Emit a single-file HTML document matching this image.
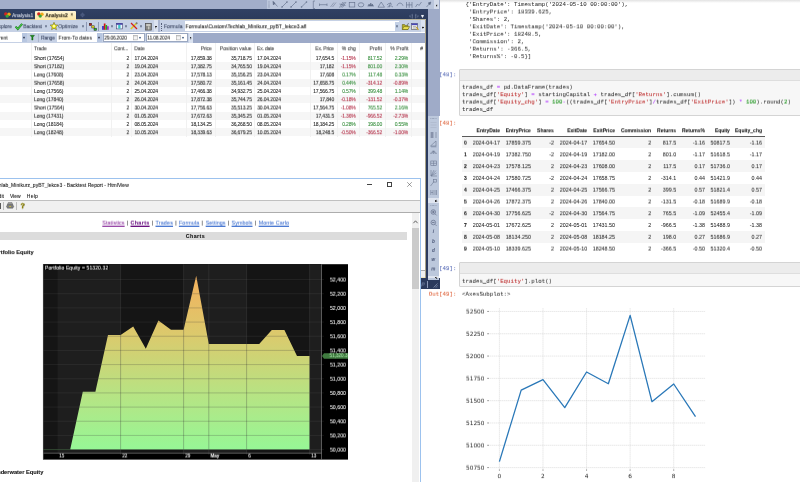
<!DOCTYPE html>
<html><head><meta charset="utf-8"><title>Backtest</title>
<style>
html,body{margin:0;padding:0}
body{width:800px;height:482px;position:relative;overflow:hidden;background:#fff;font-family:"Liberation Sans",sans-serif}
div{position:absolute;box-sizing:border-box}
svg{position:absolute;overflow:visible}
.r{left:0;width:800px}
.t{white-space:nowrap;top:0;-webkit-text-stroke:0.09px}
a{color:inherit}
</style></head><body>
<div style="left:439.5px;top:0px;width:361px;height:2.6px;background:linear-gradient(#e2e2e2,#fff);"></div>
<div style="left:459.2px;top:69.25px;width:345px;height:46.95px;background:#f7f7f7;border:0.5px solid #d4d4d4;border-radius:1px;"></div>
<div style="left:459.7px;top:69.75px;width:344px;height:11.5px;background:#ececec;border-bottom:0.5px solid #dedede;"></div>
<div style="left:459.2px;top:262.3px;width:345px;height:25.19999999999999px;background:#f7f7f7;border:0.5px solid #d4d4d4;border-radius:1px;"></div>
<div style="left:459.7px;top:262.8px;width:344px;height:11.5px;background:#ececec;border-bottom:0.5px solid #dedede;"></div>
<div style="left:461.8px;top:136.715px;width:303.4px;height:11.77px;background:#f5f5f5;"></div>
<div style="left:461.8px;top:160.255px;width:303.4px;height:11.77px;background:#f5f5f5;"></div>
<div style="left:461.8px;top:183.79500000000002px;width:303.4px;height:11.77px;background:#f5f5f5;"></div>
<div style="left:461.8px;top:207.335px;width:303.4px;height:11.77px;background:#f5f5f5;"></div>
<div style="left:461.8px;top:230.875px;width:303.4px;height:11.77px;background:#f5f5f5;"></div>
<div style="left:461.8px;top:135.85px;width:303.4px;height:0.6px;background:#5a5a5a;"></div>
<svg style="left:0;top:0" width="800" height="482" viewBox="0 0 800 482"><line x1="499.40" y1="308.10" x2="499.40" y2="468.89" stroke="#d4d4d4" stroke-width="0.55" stroke-dasharray="1.5 0.5"/><line x1="499.40" y1="469.29" x2="499.40" y2="470.89" stroke="#333" stroke-width="0.45"/><line x1="542.98" y1="308.10" x2="542.98" y2="468.89" stroke="#d4d4d4" stroke-width="0.55" stroke-dasharray="1.5 0.5"/><line x1="542.98" y1="469.29" x2="542.98" y2="470.89" stroke="#333" stroke-width="0.45"/><line x1="586.56" y1="308.10" x2="586.56" y2="468.89" stroke="#d4d4d4" stroke-width="0.55" stroke-dasharray="1.5 0.5"/><line x1="586.56" y1="469.29" x2="586.56" y2="470.89" stroke="#333" stroke-width="0.45"/><line x1="630.14" y1="308.10" x2="630.14" y2="468.89" stroke="#d4d4d4" stroke-width="0.55" stroke-dasharray="1.5 0.5"/><line x1="630.14" y1="469.29" x2="630.14" y2="470.89" stroke="#333" stroke-width="0.45"/><line x1="673.72" y1="308.10" x2="673.72" y2="468.89" stroke="#d4d4d4" stroke-width="0.55" stroke-dasharray="1.5 0.5"/><line x1="673.72" y1="469.29" x2="673.72" y2="470.89" stroke="#333" stroke-width="0.45"/><line x1="489.59" y1="467.60" x2="705.32" y2="467.60" stroke="#d4d4d4" stroke-width="0.55" stroke-dasharray="1.5 0.5"/><line x1="487.19" y1="467.60" x2="488.99" y2="467.60" stroke="#333" stroke-width="0.5"/><line x1="489.59" y1="445.29" x2="705.32" y2="445.29" stroke="#d4d4d4" stroke-width="0.55" stroke-dasharray="1.5 0.5"/><line x1="487.19" y1="445.29" x2="488.99" y2="445.29" stroke="#333" stroke-width="0.5"/><line x1="489.59" y1="422.98" x2="705.32" y2="422.98" stroke="#d4d4d4" stroke-width="0.55" stroke-dasharray="1.5 0.5"/><line x1="487.19" y1="422.98" x2="488.99" y2="422.98" stroke="#333" stroke-width="0.5"/><line x1="489.59" y1="400.67" x2="705.32" y2="400.67" stroke="#d4d4d4" stroke-width="0.55" stroke-dasharray="1.5 0.5"/><line x1="487.19" y1="400.67" x2="488.99" y2="400.67" stroke="#333" stroke-width="0.5"/><line x1="489.59" y1="378.36" x2="705.32" y2="378.36" stroke="#d4d4d4" stroke-width="0.55" stroke-dasharray="1.5 0.5"/><line x1="487.19" y1="378.36" x2="488.99" y2="378.36" stroke="#333" stroke-width="0.5"/><line x1="489.59" y1="356.05" x2="705.32" y2="356.05" stroke="#d4d4d4" stroke-width="0.55" stroke-dasharray="1.5 0.5"/><line x1="487.19" y1="356.05" x2="488.99" y2="356.05" stroke="#333" stroke-width="0.5"/><line x1="489.59" y1="333.74" x2="705.32" y2="333.74" stroke="#d4d4d4" stroke-width="0.55" stroke-dasharray="1.5 0.5"/><line x1="487.19" y1="333.74" x2="488.99" y2="333.74" stroke="#333" stroke-width="0.5"/><line x1="489.59" y1="311.43" x2="705.32" y2="311.43" stroke="#d4d4d4" stroke-width="0.55" stroke-dasharray="1.5 0.5"/><line x1="487.19" y1="311.43" x2="488.99" y2="311.43" stroke="#333" stroke-width="0.5"/><polyline points="499.40,461.58 521.19,390.10 542.98,379.61 564.77,407.64 586.56,371.99 608.35,383.72 630.14,315.41 651.93,401.66 673.72,383.99 695.51,416.70" fill="none" stroke="#2a78b8" stroke-width="1.3" stroke-linejoin="round"/></svg>
<div class="r" style="top:1px;height:8px;line-height:8px;transform:translate3d(0,0.0px,0) rotateX(0.01deg);"><div class="t" style="left:465.6px;font-size:5.78px;color:#2a2a2a;font-family:'Liberation Mono',monospace;-webkit-text-stroke:0.03px;white-space:pre;">{'EntryDate': Timestamp('2024-05-10 00:00:00'),</div></div>
<div class="r" style="top:8px;height:8px;line-height:8px;transform:translate3d(0,0.44px,0) rotateX(0.01deg);"><div class="t" style="left:465.6px;font-size:5.78px;color:#2a2a2a;font-family:'Liberation Mono',monospace;-webkit-text-stroke:0.03px;white-space:pre;"> 'EntryPrice': 18339.625,</div></div>
<div class="r" style="top:15px;height:8px;line-height:8px;transform:translate3d(0,0.88px,0) rotateX(0.01deg);"><div class="t" style="left:465.6px;font-size:5.78px;color:#2a2a2a;font-family:'Liberation Mono',monospace;-webkit-text-stroke:0.03px;white-space:pre;"> 'Shares': 2,</div></div>
<div class="r" style="top:23px;height:8px;line-height:8px;transform:translate3d(0,0.32px,0) rotateX(0.01deg);"><div class="t" style="left:465.6px;font-size:5.78px;color:#2a2a2a;font-family:'Liberation Mono',monospace;-webkit-text-stroke:0.03px;white-space:pre;"> 'ExitDate': Timestamp('2024-05-10 00:00:00'),</div></div>
<div class="r" style="top:30px;height:8px;line-height:8px;transform:translate3d(0,0.76px,0) rotateX(0.01deg);"><div class="t" style="left:465.6px;font-size:5.78px;color:#2a2a2a;font-family:'Liberation Mono',monospace;-webkit-text-stroke:0.03px;white-space:pre;"> 'ExitPrice': 18248.5,</div></div>
<div class="r" style="top:38px;height:8px;line-height:8px;transform:translate3d(0,0.2px,0) rotateX(0.01deg);"><div class="t" style="left:465.6px;font-size:5.78px;color:#2a2a2a;font-family:'Liberation Mono',monospace;-webkit-text-stroke:0.03px;white-space:pre;"> 'Commission': 2,</div></div>
<div class="r" style="top:45px;height:8px;line-height:8px;transform:translate3d(0,0.64px,0) rotateX(0.01deg);"><div class="t" style="left:465.6px;font-size:5.78px;color:#2a2a2a;font-family:'Liberation Mono',monospace;-webkit-text-stroke:0.03px;white-space:pre;"> 'Returns': -366.5,</div></div>
<div class="r" style="top:53px;height:8px;line-height:8px;transform:translate3d(0,0.08px,0) rotateX(0.01deg);"><div class="t" style="left:465.6px;font-size:5.78px;color:#2a2a2a;font-family:'Liberation Mono',monospace;-webkit-text-stroke:0.03px;white-space:pre;"> 'Returns%': -0.5}]</div></div>
<div class="r" style="top:71px;height:8px;line-height:8px;transform:translate3d(0,0.3px,0) rotateX(0.01deg);"><div class="t" style="right:343.6px;font-size:5.78px;color:#4a5fb0;font-family:'Liberation Mono',monospace;-webkit-text-stroke:0.03px;white-space:pre;">In [48]:</div></div>
<div class="r" style="top:83px;height:8px;line-height:8px;transform:translate3d(0,0.7px,0) rotateX(0.01deg);"><div class="t" style="left:462.1px;font-size:5.78px;color:#2a2a2a;font-family:'Liberation Mono',monospace;-webkit-text-stroke:0.03px;">trades_df <span style="color:#a2f">=</span> pd.DataFrame(trades)</div></div>
<div class="r" style="top:91px;height:8px;line-height:8px;transform:translate3d(0,0.13px,0) rotateX(0.01deg);"><div class="t" style="left:462.1px;font-size:5.78px;color:#2a2a2a;font-family:'Liberation Mono',monospace;-webkit-text-stroke:0.03px;">trades_df[<span style="color:#ba2121">'Equity'</span>] <span style="color:#a2f">=</span> startingCapital <span style="color:#a2f">+</span> trades_df[<span style="color:#ba2121">'Returns'</span>].cumsum()</div></div>
<div class="r" style="top:98px;height:8px;line-height:8px;transform:translate3d(0,0.56px,0) rotateX(0.01deg);"><div class="t" style="left:462.1px;font-size:5.78px;color:#2a2a2a;font-family:'Liberation Mono',monospace;-webkit-text-stroke:0.03px;">trades_df[<span style="color:#ba2121">'Equity_chg'</span>] <span style="color:#a2f">=</span> <span style="color:#080">100</span><span style="color:#a2f">-</span>((trades_df[<span style="color:#ba2121">'EntryPrice'</span>]<span style="color:#a2f">/</span>trades_df[<span style="color:#ba2121">'ExitPrice'</span>]) <span style="color:#a2f">*</span> <span style="color:#080">100</span>).round(<span style="color:#080">2</span>)</div></div>
<div class="r" style="top:105px;height:8px;line-height:8px;transform:translate3d(0,0.99px,0) rotateX(0.01deg);"><div class="t" style="left:462.1px;font-size:5.78px;color:#2a2a2a;font-family:'Liberation Mono',monospace;-webkit-text-stroke:0.03px;">trades_df</div></div>
<div class="r" style="top:119px;height:8px;line-height:8px;transform:translate3d(0,0.7px,0) rotateX(0.01deg);"><div class="t" style="right:343.6px;font-size:5.78px;color:#dc5a30;font-family:'Liberation Mono',monospace;-webkit-text-stroke:0.03px;">Out[48]:</div></div>
<div class="r" style="top:126px;height:8px;line-height:8px;transform:translate3d(0,0.3px,0) rotateX(0.01deg);"><div class="t" style="right:300.03px;font-size:5.0px;color:#111;font-weight:700;-webkit-text-stroke:0.05px;letter-spacing:-0.027px;">EntryDate</div><div class="t" style="right:269.08px;font-size:5.0px;color:#111;font-weight:700;-webkit-text-stroke:0.05px;letter-spacing:0.021px;">EntryPrice</div><div class="t" style="right:246.08px;font-size:5.0px;color:#111;font-weight:700;-webkit-text-stroke:0.05px;letter-spacing:0.025px;">Shares</div><div class="t" style="right:212.92px;font-size:5.0px;color:#111;font-weight:700;-webkit-text-stroke:0.05px;letter-spacing:-0.015px;">ExitDate</div><div class="t" style="right:184.96px;font-size:5.0px;color:#111;font-weight:700;-webkit-text-stroke:0.05px;letter-spacing:0.037px;">ExitPrice</div><div class="t" style="right:148.88px;font-size:5.0px;color:#111;font-weight:700;-webkit-text-stroke:0.05px;letter-spacing:0.022px;">Commission</div><div class="t" style="right:123.87px;font-size:5.0px;color:#111;font-weight:700;-webkit-text-stroke:0.05px;letter-spacing:0.035px;">Returns</div><div class="t" style="right:95.05px;font-size:5.0px;color:#111;font-weight:700;-webkit-text-stroke:0.05px;letter-spacing:-0.048px;">Returns%</div><div class="t" style="right:70.18px;font-size:5.0px;color:#111;font-weight:700;-webkit-text-stroke:0.05px;letter-spacing:-0.076px;">Equity</div><div class="t" style="right:37.99px;font-size:5.0px;color:#111;font-weight:700;-webkit-text-stroke:0.05px;letter-spacing:0.006px;">Equity_chg</div></div>
<div class="r" style="top:138px;height:8px;line-height:8px;transform:translate3d(0,0.6px,0) rotateX(0.01deg);"><div class="t" style="right:333.2px;font-size:5.0px;color:#111;font-weight:700;-webkit-text-stroke:0.05px;">0</div><div class="t" style="right:300.0px;font-size:5.35px;color:#1c1c1c;-webkit-text-stroke:0.04px;">2024-04-17</div><div class="t" style="right:269.1px;font-size:5.35px;color:#1c1c1c;-webkit-text-stroke:0.04px;">17859.375</div><div class="t" style="right:246.1px;font-size:5.35px;color:#1c1c1c;-webkit-text-stroke:0.04px;">-2</div><div class="t" style="right:212.9px;font-size:5.35px;color:#1c1c1c;-webkit-text-stroke:0.04px;">2024-04-17</div><div class="t" style="right:185px;font-size:5.35px;color:#1c1c1c;-webkit-text-stroke:0.04px;">17654.50</div><div class="t" style="right:148.9px;font-size:5.35px;color:#1c1c1c;-webkit-text-stroke:0.04px;">2</div><div class="t" style="right:123.9px;font-size:5.35px;color:#1c1c1c;-webkit-text-stroke:0.04px;">817.5</div><div class="t" style="right:95px;font-size:5.35px;color:#1c1c1c;-webkit-text-stroke:0.04px;">-1.16</div><div class="t" style="right:70.1px;font-size:5.35px;color:#1c1c1c;-webkit-text-stroke:0.04px;">50817.5</div><div class="t" style="right:38px;font-size:5.35px;color:#1c1c1c;-webkit-text-stroke:0.04px;">-1.16</div></div>
<div class="r" style="top:150px;height:8px;line-height:8px;transform:translate3d(0,0.37px,0) rotateX(0.01deg);"><div class="t" style="right:333.2px;font-size:5.0px;color:#111;font-weight:700;-webkit-text-stroke:0.05px;">1</div><div class="t" style="right:300.0px;font-size:5.35px;color:#1c1c1c;-webkit-text-stroke:0.04px;">2024-04-19</div><div class="t" style="right:269.1px;font-size:5.35px;color:#1c1c1c;-webkit-text-stroke:0.04px;">17382.750</div><div class="t" style="right:246.1px;font-size:5.35px;color:#1c1c1c;-webkit-text-stroke:0.04px;">-2</div><div class="t" style="right:212.9px;font-size:5.35px;color:#1c1c1c;-webkit-text-stroke:0.04px;">2024-04-19</div><div class="t" style="right:185px;font-size:5.35px;color:#1c1c1c;-webkit-text-stroke:0.04px;">17182.00</div><div class="t" style="right:148.9px;font-size:5.35px;color:#1c1c1c;-webkit-text-stroke:0.04px;">2</div><div class="t" style="right:123.9px;font-size:5.35px;color:#1c1c1c;-webkit-text-stroke:0.04px;">801.0</div><div class="t" style="right:95px;font-size:5.35px;color:#1c1c1c;-webkit-text-stroke:0.04px;">-1.17</div><div class="t" style="right:70.1px;font-size:5.35px;color:#1c1c1c;-webkit-text-stroke:0.04px;">51618.5</div><div class="t" style="right:38px;font-size:5.35px;color:#1c1c1c;-webkit-text-stroke:0.04px;">-1.17</div></div>
<div class="r" style="top:162px;height:8px;line-height:8px;transform:translate3d(0,0.14px,0) rotateX(0.01deg);"><div class="t" style="right:333.2px;font-size:5.0px;color:#111;font-weight:700;-webkit-text-stroke:0.05px;">2</div><div class="t" style="right:300.0px;font-size:5.35px;color:#1c1c1c;-webkit-text-stroke:0.04px;">2024-04-23</div><div class="t" style="right:269.1px;font-size:5.35px;color:#1c1c1c;-webkit-text-stroke:0.04px;">17578.125</div><div class="t" style="right:246.1px;font-size:5.35px;color:#1c1c1c;-webkit-text-stroke:0.04px;">2</div><div class="t" style="right:212.9px;font-size:5.35px;color:#1c1c1c;-webkit-text-stroke:0.04px;">2024-04-23</div><div class="t" style="right:185px;font-size:5.35px;color:#1c1c1c;-webkit-text-stroke:0.04px;">17608.00</div><div class="t" style="right:148.9px;font-size:5.35px;color:#1c1c1c;-webkit-text-stroke:0.04px;">2</div><div class="t" style="right:123.9px;font-size:5.35px;color:#1c1c1c;-webkit-text-stroke:0.04px;">117.5</div><div class="t" style="right:95px;font-size:5.35px;color:#1c1c1c;-webkit-text-stroke:0.04px;">0.17</div><div class="t" style="right:70.1px;font-size:5.35px;color:#1c1c1c;-webkit-text-stroke:0.04px;">51736.0</div><div class="t" style="right:38px;font-size:5.35px;color:#1c1c1c;-webkit-text-stroke:0.04px;">0.17</div></div>
<div class="r" style="top:173px;height:8px;line-height:8px;transform:translate3d(0,0.91px,0) rotateX(0.01deg);"><div class="t" style="right:333.2px;font-size:5.0px;color:#111;font-weight:700;-webkit-text-stroke:0.05px;">3</div><div class="t" style="right:300.0px;font-size:5.35px;color:#1c1c1c;-webkit-text-stroke:0.04px;">2024-04-24</div><div class="t" style="right:269.1px;font-size:5.35px;color:#1c1c1c;-webkit-text-stroke:0.04px;">17580.725</div><div class="t" style="right:246.1px;font-size:5.35px;color:#1c1c1c;-webkit-text-stroke:0.04px;">-2</div><div class="t" style="right:212.9px;font-size:5.35px;color:#1c1c1c;-webkit-text-stroke:0.04px;">2024-04-24</div><div class="t" style="right:185px;font-size:5.35px;color:#1c1c1c;-webkit-text-stroke:0.04px;">17658.75</div><div class="t" style="right:148.9px;font-size:5.35px;color:#1c1c1c;-webkit-text-stroke:0.04px;">2</div><div class="t" style="right:123.9px;font-size:5.35px;color:#1c1c1c;-webkit-text-stroke:0.04px;">-314.1</div><div class="t" style="right:95px;font-size:5.35px;color:#1c1c1c;-webkit-text-stroke:0.04px;">0.44</div><div class="t" style="right:70.1px;font-size:5.35px;color:#1c1c1c;-webkit-text-stroke:0.04px;">51421.9</div><div class="t" style="right:38px;font-size:5.35px;color:#1c1c1c;-webkit-text-stroke:0.04px;">0.44</div></div>
<div class="r" style="top:185px;height:8px;line-height:8px;transform:translate3d(0,0.68px,0) rotateX(0.01deg);"><div class="t" style="right:333.2px;font-size:5.0px;color:#111;font-weight:700;-webkit-text-stroke:0.05px;">4</div><div class="t" style="right:300.0px;font-size:5.35px;color:#1c1c1c;-webkit-text-stroke:0.04px;">2024-04-25</div><div class="t" style="right:269.1px;font-size:5.35px;color:#1c1c1c;-webkit-text-stroke:0.04px;">17466.375</div><div class="t" style="right:246.1px;font-size:5.35px;color:#1c1c1c;-webkit-text-stroke:0.04px;">2</div><div class="t" style="right:212.9px;font-size:5.35px;color:#1c1c1c;-webkit-text-stroke:0.04px;">2024-04-25</div><div class="t" style="right:185px;font-size:5.35px;color:#1c1c1c;-webkit-text-stroke:0.04px;">17566.75</div><div class="t" style="right:148.9px;font-size:5.35px;color:#1c1c1c;-webkit-text-stroke:0.04px;">2</div><div class="t" style="right:123.9px;font-size:5.35px;color:#1c1c1c;-webkit-text-stroke:0.04px;">399.5</div><div class="t" style="right:95px;font-size:5.35px;color:#1c1c1c;-webkit-text-stroke:0.04px;">0.57</div><div class="t" style="right:70.1px;font-size:5.35px;color:#1c1c1c;-webkit-text-stroke:0.04px;">51821.4</div><div class="t" style="right:38px;font-size:5.35px;color:#1c1c1c;-webkit-text-stroke:0.04px;">0.57</div></div>
<div class="r" style="top:197px;height:8px;line-height:8px;transform:translate3d(0,0.45px,0) rotateX(0.01deg);"><div class="t" style="right:333.2px;font-size:5.0px;color:#111;font-weight:700;-webkit-text-stroke:0.05px;">5</div><div class="t" style="right:300.0px;font-size:5.35px;color:#1c1c1c;-webkit-text-stroke:0.04px;">2024-04-26</div><div class="t" style="right:269.1px;font-size:5.35px;color:#1c1c1c;-webkit-text-stroke:0.04px;">17872.375</div><div class="t" style="right:246.1px;font-size:5.35px;color:#1c1c1c;-webkit-text-stroke:0.04px;">2</div><div class="t" style="right:212.9px;font-size:5.35px;color:#1c1c1c;-webkit-text-stroke:0.04px;">2024-04-26</div><div class="t" style="right:185px;font-size:5.35px;color:#1c1c1c;-webkit-text-stroke:0.04px;">17840.00</div><div class="t" style="right:148.9px;font-size:5.35px;color:#1c1c1c;-webkit-text-stroke:0.04px;">2</div><div class="t" style="right:123.9px;font-size:5.35px;color:#1c1c1c;-webkit-text-stroke:0.04px;">-131.5</div><div class="t" style="right:95px;font-size:5.35px;color:#1c1c1c;-webkit-text-stroke:0.04px;">-0.18</div><div class="t" style="right:70.1px;font-size:5.35px;color:#1c1c1c;-webkit-text-stroke:0.04px;">51689.9</div><div class="t" style="right:38px;font-size:5.35px;color:#1c1c1c;-webkit-text-stroke:0.04px;">-0.18</div></div>
<div class="r" style="top:209px;height:8px;line-height:8px;transform:translate3d(0,0.22px,0) rotateX(0.01deg);"><div class="t" style="right:333.2px;font-size:5.0px;color:#111;font-weight:700;-webkit-text-stroke:0.05px;">6</div><div class="t" style="right:300.0px;font-size:5.35px;color:#1c1c1c;-webkit-text-stroke:0.04px;">2024-04-30</div><div class="t" style="right:269.1px;font-size:5.35px;color:#1c1c1c;-webkit-text-stroke:0.04px;">17756.625</div><div class="t" style="right:246.1px;font-size:5.35px;color:#1c1c1c;-webkit-text-stroke:0.04px;">-2</div><div class="t" style="right:212.9px;font-size:5.35px;color:#1c1c1c;-webkit-text-stroke:0.04px;">2024-04-30</div><div class="t" style="right:185px;font-size:5.35px;color:#1c1c1c;-webkit-text-stroke:0.04px;">17564.75</div><div class="t" style="right:148.9px;font-size:5.35px;color:#1c1c1c;-webkit-text-stroke:0.04px;">2</div><div class="t" style="right:123.9px;font-size:5.35px;color:#1c1c1c;-webkit-text-stroke:0.04px;">765.5</div><div class="t" style="right:95px;font-size:5.35px;color:#1c1c1c;-webkit-text-stroke:0.04px;">-1.09</div><div class="t" style="right:70.1px;font-size:5.35px;color:#1c1c1c;-webkit-text-stroke:0.04px;">52455.4</div><div class="t" style="right:38px;font-size:5.35px;color:#1c1c1c;-webkit-text-stroke:0.04px;">-1.09</div></div>
<div class="r" style="top:220px;height:8px;line-height:8px;transform:translate3d(0,0.99px,0) rotateX(0.01deg);"><div class="t" style="right:333.2px;font-size:5.0px;color:#111;font-weight:700;-webkit-text-stroke:0.05px;">7</div><div class="t" style="right:300.0px;font-size:5.35px;color:#1c1c1c;-webkit-text-stroke:0.04px;">2024-05-01</div><div class="t" style="right:269.1px;font-size:5.35px;color:#1c1c1c;-webkit-text-stroke:0.04px;">17672.625</div><div class="t" style="right:246.1px;font-size:5.35px;color:#1c1c1c;-webkit-text-stroke:0.04px;">2</div><div class="t" style="right:212.9px;font-size:5.35px;color:#1c1c1c;-webkit-text-stroke:0.04px;">2024-05-01</div><div class="t" style="right:185px;font-size:5.35px;color:#1c1c1c;-webkit-text-stroke:0.04px;">17431.50</div><div class="t" style="right:148.9px;font-size:5.35px;color:#1c1c1c;-webkit-text-stroke:0.04px;">2</div><div class="t" style="right:123.9px;font-size:5.35px;color:#1c1c1c;-webkit-text-stroke:0.04px;">-966.5</div><div class="t" style="right:95px;font-size:5.35px;color:#1c1c1c;-webkit-text-stroke:0.04px;">-1.38</div><div class="t" style="right:70.1px;font-size:5.35px;color:#1c1c1c;-webkit-text-stroke:0.04px;">51488.9</div><div class="t" style="right:38px;font-size:5.35px;color:#1c1c1c;-webkit-text-stroke:0.04px;">-1.38</div></div>
<div class="r" style="top:232px;height:8px;line-height:8px;transform:translate3d(0,0.76px,0) rotateX(0.01deg);"><div class="t" style="right:333.2px;font-size:5.0px;color:#111;font-weight:700;-webkit-text-stroke:0.05px;">8</div><div class="t" style="right:300.0px;font-size:5.35px;color:#1c1c1c;-webkit-text-stroke:0.04px;">2024-05-08</div><div class="t" style="right:269.1px;font-size:5.35px;color:#1c1c1c;-webkit-text-stroke:0.04px;">18134.250</div><div class="t" style="right:246.1px;font-size:5.35px;color:#1c1c1c;-webkit-text-stroke:0.04px;">2</div><div class="t" style="right:212.9px;font-size:5.35px;color:#1c1c1c;-webkit-text-stroke:0.04px;">2024-05-08</div><div class="t" style="right:185px;font-size:5.35px;color:#1c1c1c;-webkit-text-stroke:0.04px;">18184.25</div><div class="t" style="right:148.9px;font-size:5.35px;color:#1c1c1c;-webkit-text-stroke:0.04px;">2</div><div class="t" style="right:123.9px;font-size:5.35px;color:#1c1c1c;-webkit-text-stroke:0.04px;">198.0</div><div class="t" style="right:95px;font-size:5.35px;color:#1c1c1c;-webkit-text-stroke:0.04px;">0.27</div><div class="t" style="right:70.1px;font-size:5.35px;color:#1c1c1c;-webkit-text-stroke:0.04px;">51686.9</div><div class="t" style="right:38px;font-size:5.35px;color:#1c1c1c;-webkit-text-stroke:0.04px;">0.27</div></div>
<div class="r" style="top:244px;height:8px;line-height:8px;transform:translate3d(0,0.53px,0) rotateX(0.01deg);"><div class="t" style="right:333.2px;font-size:5.0px;color:#111;font-weight:700;-webkit-text-stroke:0.05px;">9</div><div class="t" style="right:300.0px;font-size:5.35px;color:#1c1c1c;-webkit-text-stroke:0.04px;">2024-05-10</div><div class="t" style="right:269.1px;font-size:5.35px;color:#1c1c1c;-webkit-text-stroke:0.04px;">18339.625</div><div class="t" style="right:246.1px;font-size:5.35px;color:#1c1c1c;-webkit-text-stroke:0.04px;">2</div><div class="t" style="right:212.9px;font-size:5.35px;color:#1c1c1c;-webkit-text-stroke:0.04px;">2024-05-10</div><div class="t" style="right:185px;font-size:5.35px;color:#1c1c1c;-webkit-text-stroke:0.04px;">18248.50</div><div class="t" style="right:148.9px;font-size:5.35px;color:#1c1c1c;-webkit-text-stroke:0.04px;">2</div><div class="t" style="right:123.9px;font-size:5.35px;color:#1c1c1c;-webkit-text-stroke:0.04px;">-366.5</div><div class="t" style="right:95px;font-size:5.35px;color:#1c1c1c;-webkit-text-stroke:0.04px;">-0.50</div><div class="t" style="right:70.1px;font-size:5.35px;color:#1c1c1c;-webkit-text-stroke:0.04px;">51320.4</div><div class="t" style="right:38px;font-size:5.35px;color:#1c1c1c;-webkit-text-stroke:0.04px;">-0.50</div></div>
<div class="r" style="top:265px;height:8px;line-height:8px;transform:translate3d(0,0.1px,0) rotateX(0.01deg);"><div class="t" style="right:343.6px;font-size:5.78px;color:#4a5fb0;font-family:'Liberation Mono',monospace;-webkit-text-stroke:0.03px;white-space:pre;">In [49]:</div></div>
<div class="r" style="top:277px;height:8px;line-height:8px;transform:translate3d(0,0.8px,0) rotateX(0.01deg);"><div class="t" style="left:462.1px;font-size:5.78px;color:#2a2a2a;font-family:'Liberation Mono',monospace;-webkit-text-stroke:0.03px;">trades_df[<span style="color:#ba2121">'Equity'</span>].plot()</div></div>
<div class="r" style="top:290px;height:8px;line-height:8px;transform:translate3d(0,0.7px,0) rotateX(0.01deg);"><div class="t" style="right:343.6px;font-size:5.78px;color:#dc5a30;font-family:'Liberation Mono',monospace;-webkit-text-stroke:0.03px;">Out[49]:</div><div class="t" style="left:462.1px;font-size:5.78px;color:#2a2a2a;font-family:'Liberation Mono',monospace;-webkit-text-stroke:0.03px;">&lt;AxesSubplot:&gt;</div></div>
<div class="r" style="top:307px;height:8px;line-height:8px;transform:translate3d(0,0.53px,0) rotateX(0.01deg);"><div class="t" style="right:315.5px;font-size:5.8px;color:#262626;font-family:'DejaVu Sans',sans-serif;-webkit-text-stroke:0;">52500</div></div>
<div class="r" style="top:329px;height:8px;line-height:8px;transform:translate3d(0,0.84px,0) rotateX(0.01deg);"><div class="t" style="right:315.5px;font-size:5.8px;color:#262626;font-family:'DejaVu Sans',sans-serif;-webkit-text-stroke:0;">52250</div></div>
<div class="r" style="top:352px;height:8px;line-height:8px;transform:translate3d(0,0.15px,0) rotateX(0.01deg);"><div class="t" style="right:315.5px;font-size:5.8px;color:#262626;font-family:'DejaVu Sans',sans-serif;-webkit-text-stroke:0;">52000</div></div>
<div class="r" style="top:374px;height:8px;line-height:8px;transform:translate3d(0,0.46px,0) rotateX(0.01deg);"><div class="t" style="right:315.5px;font-size:5.8px;color:#262626;font-family:'DejaVu Sans',sans-serif;-webkit-text-stroke:0;">51750</div></div>
<div class="r" style="top:396px;height:8px;line-height:8px;transform:translate3d(0,0.77px,0) rotateX(0.01deg);"><div class="t" style="right:315.5px;font-size:5.8px;color:#262626;font-family:'DejaVu Sans',sans-serif;-webkit-text-stroke:0;">51500</div></div>
<div class="r" style="top:419px;height:8px;line-height:8px;transform:translate3d(0,0.08px,0) rotateX(0.01deg);"><div class="t" style="right:315.5px;font-size:5.8px;color:#262626;font-family:'DejaVu Sans',sans-serif;-webkit-text-stroke:0;">51250</div></div>
<div class="r" style="top:441px;height:8px;line-height:8px;transform:translate3d(0,0.39px,0) rotateX(0.01deg);"><div class="t" style="right:315.5px;font-size:5.8px;color:#262626;font-family:'DejaVu Sans',sans-serif;-webkit-text-stroke:0;">51000</div></div>
<div class="r" style="top:463px;height:8px;line-height:8px;transform:translate3d(0,0.7px,0) rotateX(0.01deg);"><div class="t" style="right:315.5px;font-size:5.8px;color:#262626;font-family:'DejaVu Sans',sans-serif;-webkit-text-stroke:0;">50750</div></div>
<div class="r" style="top:472px;height:8px;line-height:8px;transform:translate3d(0,0.1px,0) rotateX(0.01deg);"><div class="t" style="left:399.4px;width:200px;text-align:center;font-size:5.8px;color:#262626;font-family:'DejaVu Sans',sans-serif;-webkit-text-stroke:0;">0</div><div class="t" style="left:442.98px;width:200px;text-align:center;font-size:5.8px;color:#262626;font-family:'DejaVu Sans',sans-serif;-webkit-text-stroke:0;">2</div><div class="t" style="left:486.56px;width:200px;text-align:center;font-size:5.8px;color:#262626;font-family:'DejaVu Sans',sans-serif;-webkit-text-stroke:0;">4</div><div class="t" style="left:530.14px;width:200px;text-align:center;font-size:5.8px;color:#262626;font-family:'DejaVu Sans',sans-serif;-webkit-text-stroke:0;">6</div><div class="t" style="left:573.72px;width:200px;text-align:center;font-size:5.8px;color:#262626;font-family:'DejaVu Sans',sans-serif;-webkit-text-stroke:0;">8</div></div>
<div style="left:0px;top:0px;width:439.5px;height:9.2px;background:#a2aeca;"></div>
<div style="left:266.8px;top:0px;width:172.7px;height:9.2px;background:#bbc6dc;"></div>
<div style="left:434.2px;top:0px;width:4.8px;height:9.2px;background:#d5dcea;"></div>
<div style="left:425px;top:9px;width:14.5px;height:107px;background:#9fabc8;"></div>
<div style="left:427.9px;top:116px;width:11.6px;height:164px;background:#bcc8dc;"></div>
<div style="left:0px;top:9px;width:427.8px;height:11px;background:linear-gradient(#304164,#2b3a5b);"></div>
<div style="left:425.3px;top:20px;width:2.6px;height:269px;background:#2b3a5d;"></div>
<div style="left:0px;top:19.3px;width:425.8px;height:1.1px;background:linear-gradient(#8f8c7c,#ebe2bc);"></div>
<div style="left:0px;top:20.3px;width:158px;height:12.2px;background:#c6d1e5;"></div>
<div style="left:154px;top:20.3px;width:4px;height:12.2px;background:#dbe3f1;"></div>
<div style="left:158px;top:20.3px;width:2px;height:12.2px;background:#aab6d1;"></div>
<div style="left:160px;top:20.3px;width:265.5px;height:12.2px;background:#c6d1e5;"></div>
<div style="left:421px;top:20.3px;width:4.3px;height:12.2px;background:#dbe3f1;"></div>
<div style="left:425px;top:20.3px;width:0.6px;height:12.2px;background:#e9e2c4;"></div>
<div style="left:0px;top:32.5px;width:193px;height:10.2px;background:#c6d1e5;"></div>
<div style="left:188.5px;top:32.5px;width:4.5px;height:10.2px;background:#dbe3f1;"></div>
<div style="left:193px;top:32.5px;width:232.5px;height:10.2px;background:#9daac8;"></div>
<div style="left:35px;top:11.2px;width:41px;height:8.8px;background:linear-gradient(#fff6d6,#fde7a4);border-radius:1px 1px 0 0;"></div>
<svg style="left:3.6px;top:12.3px" width="7" height="6" viewBox="0 0 7 6"><circle cx="1.8" cy="2" r="1.7" fill="#d8261c"/><circle cx="5" cy="2.2" r="1.7" fill="#f0a818"/><circle cx="3.2" cy="4.1" r="1.7" fill="#38a838"/></svg>
<svg style="left:37px;top:12.3px" width="7" height="6" viewBox="0 0 7 6"><circle cx="1.8" cy="2" r="1.7" fill="#d8261c"/><circle cx="5" cy="2.2" r="1.7" fill="#f0a818"/><circle cx="3.2" cy="4.1" r="1.7" fill="#38a838"/></svg>
<svg style="left:15px;top:22.5px" width="8" height="7" viewBox="0 0 8 7"><path d="M0.6 3.6 L2.8 6 L7.2 0.8" fill="none" stroke="#1a6a1a" stroke-width="2"/><path d="M0.6 3.6 L2.8 6 L7.2 0.8" fill="none" stroke="#48d048" stroke-width="1.1"/></svg>
<svg style="left:50px;top:22px" width="8" height="8" viewBox="0 0 8 8"><path d="M4 0.3 L5.1 2.9 L7.8 3.1 L5.8 4.9 L6.4 7.6 L4 6.2 L1.6 7.6 L2.2 4.9 L0.2 3.1 L2.9 2.9 Z" fill="#f8f428" stroke="#6a6420" stroke-width="0.6"/><circle cx="4" cy="4" r="1" fill="#ffffc0"/></svg>
<div style="left:86.3px;top:22px;width:0.5px;height:9px;background:#8d99b5;"></div>
<svg style="left:89px;top:22.5px" width="8" height="8" viewBox="0 0 8 8"><rect x="0.3" y="0.3" width="2.4" height="2.2" fill="#c81818" stroke="#222" stroke-width="0.5"/><rect x="2.8" y="2.8" width="2.4" height="2.2" fill="#e8e018" stroke="#222" stroke-width="0.5"/><rect x="5" y="5.2" width="2.6" height="2.2" fill="#28b828" stroke="#222" stroke-width="0.5"/></svg>
<div style="left:98.3px;top:22px;width:0.5px;height:9px;background:#8d99b5;"></div>
<svg style="left:102px;top:22.5px" width="7" height="7" viewBox="0 0 7 7"><rect x="0.2" y="3" width="1.6" height="3.8" fill="#2020d0"/><rect x="1.8" y="0.5" width="1.7" height="6.3" fill="#d01818"/><rect x="3.5" y="2" width="1.6" height="4.8" fill="#20a820"/><rect x="5.1" y="3.2" width="1.6" height="3.6" fill="#a020c0"/></svg>
<svg style="left:116px;top:22.8px" width="7" height="6.5" viewBox="0 0 7 6.5"><rect x="0.3" y="0.3" width="6.2" height="5.6" fill="#eef" stroke="#446" stroke-width="0.6"/><rect x="0.3" y="0.3" width="6.2" height="1.4" fill="#3030a0"/><rect x="2.2" y="2" width="2.3" height="3.6" fill="#38c8c8"/></svg>
<svg style="left:130px;top:22.3px" width="8" height="8" viewBox="0 0 8 8"><path d="M0.8 7 L6.8 1" stroke="#e0c820" stroke-width="1.6"/><path d="M1 1 L7 7" stroke="#d02020" stroke-width="1.3"/><circle cx="6.6" cy="1.2" r="1" fill="#777"/></svg>
<svg style="left:145px;top:22.5px" width="7" height="7.5" viewBox="0 0 7 7.5"><rect x="0.3" y="0.3" width="6" height="6.8" fill="#8a8a86" stroke="#444" stroke-width="0.6"/><rect x="1.2" y="1.2" width="4.2" height="1.6" fill="#d8d8d0"/><rect x="3" y="3.4" width="1.4" height="3" fill="#c8c8c0"/></svg>
<div style="left:155.2px;top:26.4px;width:1.6px;height:0.5px;background:#333;"></div>
<div style="left:161.3px;top:22.5px;width:0.6px;height:8px;background:transparent;border-left:0.6px dotted #56607a;"></div>
<div style="left:184.5px;top:21.4px;width:214.5px;height:9.8px;background:#fff;"></div>
<div style="left:394.5px;top:22px;width:4.5px;height:9.2px;background:#c3d0e6;"></div>
<svg style="left:402px;top:22.5px" width="8" height="7" viewBox="0 0 8 7"><path d="M0.3 6.5 L0.3 1.5 L2.5 1.5 L3.2 2.4 L6 2.4 L6 6.5 Z" fill="#b8b020" stroke="#55500a" stroke-width="0.5"/><path d="M0.3 6.5 L1.8 3.6 L7.6 3.6 L6 6.5 Z" fill="#e8e050" stroke="#55500a" stroke-width="0.5"/><path d="M5 1.6 L7 0.4" stroke="#444" stroke-width="0.6"/></svg>
<svg style="left:411px;top:22.5px" width="8" height="7.5" viewBox="0 0 8 7.5"><rect x="0.4" y="0.4" width="6.2" height="6" fill="#e8e8e8" stroke="#555" stroke-width="0.6"/><rect x="0.4" y="0.4" width="6.2" height="1.7" fill="#4848b8"/><path d="M2 3.5h3M2 5h3" stroke="#888" stroke-width="0.5"/><path d="M5.4 4.2 L7.4 6.9" stroke="#c8a018" stroke-width="1.1"/></svg>
<div style="left:422.4px;top:26.7px;width:1.6px;height:0.5px;background:#333;"></div>
<div style="left:0px;top:33.2px;width:22px;height:8.8px;background:#fff;"></div>
<div style="left:22px;top:33.4px;width:4.6px;height:8.4px;background:#b7c6e0;"></div>
<svg style="left:29.9px;top:34.9px" width="5" height="5.4" viewBox="0 0 6 6.5"><path d="M0.2 0.4 H5.4 L3.6 2.8 V6 H2.1 V2.8 Z" fill="#1f8a1f" stroke="#0f5a0f" stroke-width="0.5"/></svg>
<div style="left:38px;top:34px;width:0.5px;height:7.6px;background:#aab5cc;"></div>
<div style="left:57px;top:33.2px;width:40px;height:8.8px;background:#fff;"></div>
<div style="left:97px;top:33.4px;width:4.6px;height:8.4px;background:#b7c6e0;"></div>
<div style="left:103px;top:33px;width:41.5px;height:9.2px;background:#fff;border:0.5px solid #9aa7c0;"></div>
<svg style="left:132.9px;top:35px" width="5" height="5.4" viewBox="0 0 5 5.4"><rect x="0.3" y="0.3" width="4.2" height="4.6" fill="#f4f4f4" stroke="#9a9a9a" stroke-width="0.5"/><rect x="0.3" y="0.3" width="4.2" height="1" fill="#bbb"/></svg>
<div style="left:146px;top:33px;width:41.5px;height:9.2px;background:#fff;border:0.5px solid #9aa7c0;"></div>
<svg style="left:175.9px;top:35px" width="5" height="5.4" viewBox="0 0 5 5.4"><rect x="0.3" y="0.3" width="4.2" height="4.6" fill="#f4f4f4" stroke="#9a9a9a" stroke-width="0.5"/><rect x="0.3" y="0.3" width="4.2" height="1" fill="#bbb"/></svg>
<div style="left:189.9px;top:37.4px;width:1.6px;height:0.5px;background:#333;"></div>
<svg style="left:0;top:0" width="440" height="10" viewBox="0 0 440 10" fill="none" stroke="#5d6985" stroke-width="0.6"><line x1="269" y1="1.5" x2="269" y2="8" stroke-dasharray="0.6 0.6"/><path d="M273 1.5 L277.5 6.5 M273 1.5 L273.4 5 L275 3.4 Z" fill="#5d6985"/><path d="M282.0 7 L287.0 2" /><circle cx="287.0" cy="2" r="0.5"/><circle cx="282.0" cy="7" r="0.5"/><path d="M291.0 7 L296.0 2" /><circle cx="296.0" cy="2" r="0.5"/><circle cx="291.0" cy="7" r="0.5"/><path d="M301.5 7 L306.5 2" /><circle cx="306.5" cy="2" r="0.5"/><circle cx="301.5" cy="7" r="0.5"/><path d="M315 1 H313.3 V8.5 H315"/><path d="M319.5 4.7 H327 M319.5 3.5 V6 M327 3.5 V6"/><path d="M330.5 7 L334 2.5 M332.5 7 L336 2.5" stroke-width="0.45"/><path d="M339.5 7.5 L343 2 M341 7.5 L344.5 2 M342.5 7.5 L346 2 M339.5 4 L345.5 5.5"/><rect x="349.2" y="2.6" width="5.6" height="4.4"/><ellipse cx="361" cy="4.8" rx="2.8" ry="2.1"/><path d="M367.5 6 H374 M368.5 6 L369 4 L370 6 L370.8 3 L371.5 6 L372.3 4 L373 6" fill="#5d6985"/><path d="M378 7.2 H384.5 L381.2 2 Z"/><path d="M387 5 C388.5 3, 390 3, 392 4.4 M387.5 7 C389 5.5, 391 5.5, 393 7 M390.5 2.5 L389 7.5"/><path d="M397 5.8 C398 2.2, 402 2.2, 403 5.8"/><path d="M406.5 2 V7.8 M409.2 2 V7.8 M412 2 V7.8 M406.5 4.9 H412"/><path d="M415.5 7 L417.5 4 L419 5.5 L421.5 2"/><path d="M426.5 7 L430.5 2.5 M430.8 2 L428.2 3 L430 4.8 Z" fill="#5d6985"/></svg>
<div style="left:435.7px;top:4.7px;width:1.6px;height:0.5px;background:#333;"></div>
<div style="left:0px;top:42.7px;width:425.3px;height:228px;background:#fff;"></div>
<div style="left:421px;top:270px;width:4.3px;height:7.4px;background:#f0f0f0;border-top:0.5px solid #aaa;"></div>
<div style="left:421px;top:277.3px;width:4.3px;height:0.8px;background:#efe6c0;"></div>
<div style="left:425.0px;top:20px;width:0.35px;height:257.5px;background:#a8a288;"></div>
<div style="left:0px;top:62.125px;width:425.4px;height:8.25px;background:#f6f6f6;"></div>
<div style="left:0px;top:78.625px;width:425.4px;height:8.25px;background:#f6f6f6;"></div>
<div style="left:0px;top:95.125px;width:425.4px;height:8.25px;background:#f6f6f6;"></div>
<div style="left:0px;top:111.625px;width:425.4px;height:8.25px;background:#f6f6f6;"></div>
<div style="left:0px;top:128.125px;width:425.4px;height:8.25px;background:#f6f6f6;"></div>
<div style="left:31px;top:42.7px;width:0.5px;height:94.5px;background:#f1f1f1;"></div>
<div style="left:110.6px;top:42.7px;width:0.5px;height:94.5px;background:#f1f1f1;"></div>
<div style="left:131.3px;top:42.7px;width:0.5px;height:94.5px;background:#f1f1f1;"></div>
<div style="left:186px;top:42.7px;width:0.5px;height:94.5px;background:#f1f1f1;"></div>
<div style="left:214.6px;top:42.7px;width:0.5px;height:94.5px;background:#f1f1f1;"></div>
<div style="left:254.4px;top:42.7px;width:0.5px;height:94.5px;background:#f1f1f1;"></div>
<div style="left:310px;top:42.7px;width:0.5px;height:94.5px;background:#f1f1f1;"></div>
<div style="left:336.9px;top:42.7px;width:0.5px;height:94.5px;background:#f1f1f1;"></div>
<div style="left:358.9px;top:42.7px;width:0.5px;height:94.5px;background:#f1f1f1;"></div>
<div style="left:384.5px;top:42.7px;width:0.5px;height:94.5px;background:#f1f1f1;"></div>
<div style="left:410.6px;top:42.7px;width:0.5px;height:94.5px;background:#f1f1f1;"></div>
<svg style="left:0;top:0" width="440" height="290" viewBox="0 0 440 290" fill="none" stroke="#6d7892" stroke-width="0.6"><line x1="430.5" y1="118.5" x2="436.5" y2="118.5" stroke-dasharray="0.7 0.7"/><path d="M430.5 122.5 H436.5 M430.5 125 H436.5 M430.5 127.5 H436.5" stroke="#aab4c8"/><path d="M431.3 132 V138 M432.6 132 V138 M436 132 V138" /><rect x="430.8" y="132" width="2.6" height="6" fill="#8792ab" stroke="none"/><path d="M430.5 146 L436 141 V146 Z M431 146.8 H436.5"/><path d="M430.5 154 C432 150, 435 150, 436.5 154 M431.5 154 L433.5 151 M433.5 154 V151 M435.5 154 L433.5 151"/><rect x="430.8" y="161" width="5.6" height="4.6"/><path d="M430.8 163.3 H436.4 M433.6 161 V165.6"/><path d="M431 170 V176 H437 M431 176 L436 170.5 M431 176 L436.5 173 M431 176 L434 170"/><path d="M430.5 186 L434 181.5"/><rect x="433.6" y="179.5" width="3" height="2.6"/><path d="M430.8 190 V195 M433 190 V195 M435 190 V195 M436.5 190 V195 M430.8 192.5 H433"/><circle cx="433.3" cy="212" r="2.3" stroke="#66718c" stroke-width="0.7" fill="#b4bfd4"/><path d="M432.1 212 H434.5 M433.3 210.8 V213.2" stroke="#4a5570"/><path d="M435 213.8 L436.6 215.4" stroke="#66718c" stroke-width="0.7"/><circle cx="433.3" cy="222.5" r="2.3" stroke="#66718c" stroke-width="0.7" fill="#b4bfd4"/><path d="M432.1 222.5 H434.5" stroke="#4a5570"/><path d="M435 224.3 L436.6 225.9" stroke="#66718c" stroke-width="0.7"/></svg>
<div style="left:428.2px;top:198.3px;width:11px;height:4.6px;background:#dfe5f0;"></div>
<div style="left:434.8px;top:199.8px;width:0.5px;height:1.8px;background:#333;"></div>
<div style="left:428.2px;top:275.8px;width:11px;height:4.2px;background:#dfe5f0;"></div>
<div style="left:434.8px;top:277px;width:0.5px;height:1.8px;background:#333;"></div>
<svg style="left:0;top:0" width="440" height="290" viewBox="0 0 440 290"><line x1="430.5" y1="205.5" x2="436.5" y2="205.5" stroke="#6d7892" stroke-width="0.6" stroke-dasharray="0.7 0.7"/></svg>
<div style="left:420px;top:278.1px;width:19.5px;height:10.9px;background:#2b3a5d;"></div>
<div style="left:427.9px;top:278.1px;width:11.6px;height:2px;background:#bcc8dc;"></div>
<div style="left:426.6px;top:281px;width:0.5px;height:7px;background:#8f9cba;"></div>
<svg style="left:433px;top:283px" width="5" height="5" viewBox="0 0 5 5"><path d="M0.5 4.5 L4.5 0.5 M2.2 4.5 L4.5 2.2 M3.8 4.5 L4.5 3.8" stroke="#9aa6c2" stroke-width="0.6"/></svg>
<div class="r" style="top:2px;height:8px;line-height:8px;transform:translate3d(0,0.6px,0) rotateX(0.01deg);"><div class="t" style="left:336.5px;width:200px;text-align:center;font-size:2.6px;color:#222;">▾</div></div>
<div class="r" style="top:11px;height:8px;line-height:8px;transform:translate3d(0,0.2px,0) rotateX(0.01deg);"><div class="t" style="left:12px;font-size:5.0px;color:#d6dcea;">Analysis1</div><div class="t" style="left:45.3px;font-size:5.0px;color:#2a2418;font-weight:700;letter-spacing:-0.12px;">Analysis2</div><div class="t" style="left:70.6px;font-size:4.5px;color:#5a5238;">×</div><div class="t" style="left:79.5px;font-size:5.5px;color:#56658a;">✥</div></div>
<div class="r" style="top:11px;height:8px;line-height:8px;transform:translate3d(0,0.5px,0) rotateX(0.01deg);"><div class="t" style="left:310.5px;width:200px;text-align:center;font-size:5.2px;color:#8f9cba;">◁</div><div class="t" style="left:316.5px;width:200px;text-align:center;font-size:5.2px;color:#8f9cba;">▷</div></div>
<div class="r" style="top:11px;height:8px;line-height:8px;transform:translate3d(0,0.9px,0) rotateX(0.01deg);"><div class="t" style="left:322.5px;width:200px;text-align:center;font-size:5.5px;color:#eef1f8;">▾</div></div>
<div class="r" style="top:22px;height:8px;line-height:8px;transform:translate3d(0,0.2px,0) rotateX(0.01deg);"><div class="t" style="right:788px;font-size:5.0px;color:#3a4560;">Explore</div><div class="t" style="left:23.2px;font-size:5.0px;color:#3a4560;letter-spacing:-0.054px;">Backtest</div><div class="t" style="left:58.2px;font-size:5.0px;color:#3a4560;letter-spacing:0.010px;">Optimize</div><div class="t" style="left:164px;font-size:5.0px;color:#3a4560;letter-spacing:0.027px;">Formula</div></div>
<div class="r" style="top:22px;height:8px;line-height:8px;transform:translate3d(0,0.3px,0) rotateX(0.01deg);"><div class="t" style="left:185.6px;font-size:5.0px;color:#222;letter-spacing:0.065px;">Formulas\Custom\Techlab_Minikurz_pyBT_lekce3.afl</div></div>
<div class="r" style="top:22px;height:8px;line-height:8px;transform:translate3d(0,0.4px,0) rotateX(0.01deg);"><div class="t" style="left:-54.5px;width:200px;text-align:center;font-size:4px;color:#3a4560;">▾</div><div class="t" style="left:-17.5px;width:200px;text-align:center;font-size:4px;color:#3a4560;">▾</div><div class="t" style="left:11.5px;width:200px;text-align:center;font-size:4px;color:#3a4560;">▾</div><div class="t" style="left:26px;width:200px;text-align:center;font-size:4px;color:#3a4560;">▾</div><div class="t" style="left:40.5px;width:200px;text-align:center;font-size:4px;color:#3a4560;">▾</div><div class="t" style="left:296.7px;width:200px;text-align:center;font-size:3.5px;color:#3a4560;">▾</div></div>
<div class="r" style="top:24px;height:8px;line-height:8px;transform:translate3d(0,0.3px,0) rotateX(0.01deg);"><div class="t" style="left:56px;width:200px;text-align:center;font-size:2.6px;color:#222;">▾</div></div>
<div class="r" style="top:24px;height:8px;line-height:8px;transform:translate3d(0,0.6px,0) rotateX(0.01deg);"><div class="t" style="left:323.2px;width:200px;text-align:center;font-size:2.6px;color:#222;">▾</div></div>
<div class="r" style="top:33px;height:8px;line-height:8px;transform:translate3d(0,0.6px,0) rotateX(0.01deg);"><div class="t" style="right:792.4px;font-size:5.0px;color:#333;">Current</div><div class="t" style="left:41px;font-size:5.0px;color:#3a4560;letter-spacing:-0.183px;">Range</div><div class="t" style="left:58.5px;font-size:5.0px;color:#333;letter-spacing:0.106px;">From-To dates</div><div class="t" style="left:104.2px;font-size:5.0px;color:#333;letter-spacing:-0.247px;">29.06.2020</div><div class="t" style="left:147.2px;font-size:5.0px;color:#333;letter-spacing:-0.206px;">11.08.2024</div></div>
<div class="r" style="top:33px;height:8px;line-height:8px;transform:translate3d(0,0.8px,0) rotateX(0.01deg);"><div class="t" style="left:-75.7px;width:200px;text-align:center;font-size:3.5px;color:#1a2238;">▾</div><div class="t" style="left:-0.7px;width:200px;text-align:center;font-size:3.5px;color:#1a2238;">▾</div></div>
<div class="r" style="top:33px;height:8px;line-height:8px;transform:translate3d(0,0.9px,0) rotateX(0.01deg);"><div class="t" style="left:40.3px;width:200px;text-align:center;font-size:3.5px;color:#33507a;">▾</div><div class="t" style="left:83.3px;width:200px;text-align:center;font-size:3.5px;color:#33507a;">▾</div></div>
<div class="r" style="top:35px;height:8px;line-height:8px;transform:translate3d(0,0.3px,0) rotateX(0.01deg);"><div class="t" style="left:90.7px;width:200px;text-align:center;font-size:2.6px;color:#222;">▾</div></div>
<div class="r" style="top:44px;height:8px;line-height:8px;transform:translate3d(0,0.3px,0) rotateX(0.01deg);"><div class="t" style="left:34px;font-size:5.0px;color:#444;letter-spacing:-0.019px;">Trade</div><div class="t" style="left:113.9px;font-size:5.0px;color:#444;letter-spacing:-0.021px;">Cont...</div><div class="t" style="left:134.2px;font-size:5.0px;color:#444;letter-spacing:-0.021px;">Date</div><div class="t" style="left:200.8px;font-size:5.0px;color:#444;letter-spacing:-0.123px;">Price</div><div class="t" style="left:219.8px;font-size:5.0px;color:#444;letter-spacing:0.044px;">Position value</div><div class="t" style="left:257px;font-size:5.0px;color:#444;letter-spacing:-0.164px;">Ex. date</div><div class="t" style="left:315.3px;font-size:5.0px;color:#444;letter-spacing:-0.163px;">Ex. Price</div><div class="t" style="left:341.8px;font-size:5.0px;color:#444;letter-spacing:0.026px;">% chg</div><div class="t" style="left:369.5px;font-size:5.0px;color:#444;letter-spacing:0.166px;">Profit</div><div class="t" style="left:390.3px;font-size:5.0px;color:#444;letter-spacing:0.071px;">% Profit</div><div class="t" style="left:420.2px;font-size:5.0px;color:#444;letter-spacing:-0.381px;">#</div></div>
<div class="r" style="top:54px;height:8px;line-height:8px;transform:translate3d(0,0.0px,0) rotateX(0.01deg);"><div class="t" style="left:34px;font-size:5.0px;color:#2a2a2a;letter-spacing:-0.040px;">Short (17654)</div><div class="t" style="right:670.8px;font-size:5.0px;color:#2a2a2a;">2</div><div class="t" style="left:134.4px;font-size:5.0px;color:#2a2a2a;letter-spacing:-0.140px;">17.04.2024</div><div class="t" style="right:588.36px;font-size:5.0px;color:#2a2a2a;letter-spacing:-0.160px;">17,859.38</div><div class="t" style="right:548.16px;font-size:5.0px;color:#2a2a2a;letter-spacing:-0.160px;">35,718.75</div><div class="t" style="left:257.2px;font-size:5.0px;color:#2a2a2a;letter-spacing:-0.140px;">17.04.2024</div><div class="t" style="right:465.96px;font-size:5.0px;color:#2a2a2a;letter-spacing:-0.160px;">17,654.5</div><div class="t" style="right:444.36px;font-size:5.0px;color:#b4324a;letter-spacing:-0.160px;">-1.15%</div><div class="t" style="right:417.96px;font-size:5.0px;color:#3a9040;letter-spacing:-0.160px;">817.52</div><div class="t" style="right:391.86px;font-size:5.0px;color:#3a9040;letter-spacing:-0.160px;">2.29%</div></div>
<div class="r" style="top:62px;height:8px;line-height:8px;transform:translate3d(0,0.25px,0) rotateX(0.01deg);"><div class="t" style="left:34px;font-size:5.0px;color:#2a2a2a;letter-spacing:-0.040px;">Short (17182)</div><div class="t" style="right:670.8px;font-size:5.0px;color:#2a2a2a;">2</div><div class="t" style="left:134.4px;font-size:5.0px;color:#2a2a2a;letter-spacing:-0.140px;">19.04.2024</div><div class="t" style="right:588.36px;font-size:5.0px;color:#2a2a2a;letter-spacing:-0.160px;">17,382.75</div><div class="t" style="right:548.16px;font-size:5.0px;color:#2a2a2a;letter-spacing:-0.160px;">34,765.50</div><div class="t" style="left:257.2px;font-size:5.0px;color:#2a2a2a;letter-spacing:-0.140px;">19.04.2024</div><div class="t" style="right:465.96px;font-size:5.0px;color:#2a2a2a;letter-spacing:-0.160px;">17,182</div><div class="t" style="right:444.36px;font-size:5.0px;color:#b4324a;letter-spacing:-0.160px;">-1.15%</div><div class="t" style="right:417.96px;font-size:5.0px;color:#3a9040;letter-spacing:-0.160px;">801.00</div><div class="t" style="right:391.86px;font-size:5.0px;color:#3a9040;letter-spacing:-0.160px;">2.30%</div></div>
<div class="r" style="top:70px;height:8px;line-height:8px;transform:translate3d(0,0.5px,0) rotateX(0.01deg);"><div class="t" style="left:34px;font-size:5.0px;color:#2a2a2a;letter-spacing:-0.040px;">Long (17608)</div><div class="t" style="right:670.8px;font-size:5.0px;color:#2a2a2a;">2</div><div class="t" style="left:134.4px;font-size:5.0px;color:#2a2a2a;letter-spacing:-0.140px;">23.04.2024</div><div class="t" style="right:588.36px;font-size:5.0px;color:#2a2a2a;letter-spacing:-0.160px;">17,578.13</div><div class="t" style="right:548.16px;font-size:5.0px;color:#2a2a2a;letter-spacing:-0.160px;">35,156.25</div><div class="t" style="left:257.2px;font-size:5.0px;color:#2a2a2a;letter-spacing:-0.140px;">23.04.2024</div><div class="t" style="right:465.96px;font-size:5.0px;color:#2a2a2a;letter-spacing:-0.160px;">17,608</div><div class="t" style="right:444.36px;font-size:5.0px;color:#3a9040;letter-spacing:-0.160px;">0.17%</div><div class="t" style="right:417.96px;font-size:5.0px;color:#3a9040;letter-spacing:-0.160px;">117.48</div><div class="t" style="right:391.86px;font-size:5.0px;color:#3a9040;letter-spacing:-0.160px;">0.33%</div></div>
<div class="r" style="top:78px;height:8px;line-height:8px;transform:translate3d(0,0.75px,0) rotateX(0.01deg);"><div class="t" style="left:34px;font-size:5.0px;color:#2a2a2a;letter-spacing:-0.040px;">Short (17658)</div><div class="t" style="right:670.8px;font-size:5.0px;color:#2a2a2a;">2</div><div class="t" style="left:134.4px;font-size:5.0px;color:#2a2a2a;letter-spacing:-0.140px;">24.04.2024</div><div class="t" style="right:588.36px;font-size:5.0px;color:#2a2a2a;letter-spacing:-0.160px;">17,580.72</div><div class="t" style="right:548.16px;font-size:5.0px;color:#2a2a2a;letter-spacing:-0.160px;">35,161.45</div><div class="t" style="left:257.2px;font-size:5.0px;color:#2a2a2a;letter-spacing:-0.140px;">24.04.2024</div><div class="t" style="right:465.96px;font-size:5.0px;color:#2a2a2a;letter-spacing:-0.160px;">17,658.75</div><div class="t" style="right:444.36px;font-size:5.0px;color:#3a9040;letter-spacing:-0.160px;">0.44%</div><div class="t" style="right:417.96px;font-size:5.0px;color:#b4324a;letter-spacing:-0.160px;">-314.12</div><div class="t" style="right:391.86px;font-size:5.0px;color:#b4324a;letter-spacing:-0.160px;">-0.89%</div></div>
<div class="r" style="top:87px;height:8px;line-height:8px;transform:translate3d(0,0.0px,0) rotateX(0.01deg);"><div class="t" style="left:34px;font-size:5.0px;color:#2a2a2a;letter-spacing:-0.040px;">Long (17566)</div><div class="t" style="right:670.8px;font-size:5.0px;color:#2a2a2a;">2</div><div class="t" style="left:134.4px;font-size:5.0px;color:#2a2a2a;letter-spacing:-0.140px;">25.04.2024</div><div class="t" style="right:588.36px;font-size:5.0px;color:#2a2a2a;letter-spacing:-0.160px;">17,466.38</div><div class="t" style="right:548.16px;font-size:5.0px;color:#2a2a2a;letter-spacing:-0.160px;">34,932.75</div><div class="t" style="left:257.2px;font-size:5.0px;color:#2a2a2a;letter-spacing:-0.140px;">25.04.2024</div><div class="t" style="right:465.96px;font-size:5.0px;color:#2a2a2a;letter-spacing:-0.160px;">17,566.75</div><div class="t" style="right:444.36px;font-size:5.0px;color:#3a9040;letter-spacing:-0.160px;">0.57%</div><div class="t" style="right:417.96px;font-size:5.0px;color:#3a9040;letter-spacing:-0.160px;">399.48</div><div class="t" style="right:391.86px;font-size:5.0px;color:#3a9040;letter-spacing:-0.160px;">1.14%</div></div>
<div class="r" style="top:95px;height:8px;line-height:8px;transform:translate3d(0,0.25px,0) rotateX(0.01deg);"><div class="t" style="left:34px;font-size:5.0px;color:#2a2a2a;letter-spacing:-0.040px;">Long (17840)</div><div class="t" style="right:670.8px;font-size:5.0px;color:#2a2a2a;">2</div><div class="t" style="left:134.4px;font-size:5.0px;color:#2a2a2a;letter-spacing:-0.140px;">26.04.2024</div><div class="t" style="right:588.36px;font-size:5.0px;color:#2a2a2a;letter-spacing:-0.160px;">17,872.38</div><div class="t" style="right:548.16px;font-size:5.0px;color:#2a2a2a;letter-spacing:-0.160px;">35,744.75</div><div class="t" style="left:257.2px;font-size:5.0px;color:#2a2a2a;letter-spacing:-0.140px;">26.04.2024</div><div class="t" style="right:465.96px;font-size:5.0px;color:#2a2a2a;letter-spacing:-0.160px;">17,840</div><div class="t" style="right:444.36px;font-size:5.0px;color:#b4324a;letter-spacing:-0.160px;">-0.18%</div><div class="t" style="right:417.96px;font-size:5.0px;color:#b4324a;letter-spacing:-0.160px;">-131.52</div><div class="t" style="right:391.86px;font-size:5.0px;color:#b4324a;letter-spacing:-0.160px;">-0.37%</div></div>
<div class="r" style="top:103px;height:8px;line-height:8px;transform:translate3d(0,0.5px,0) rotateX(0.01deg);"><div class="t" style="left:34px;font-size:5.0px;color:#2a2a2a;letter-spacing:-0.040px;">Short (17564)</div><div class="t" style="right:670.8px;font-size:5.0px;color:#2a2a2a;">2</div><div class="t" style="left:134.4px;font-size:5.0px;color:#2a2a2a;letter-spacing:-0.140px;">30.04.2024</div><div class="t" style="right:588.36px;font-size:5.0px;color:#2a2a2a;letter-spacing:-0.160px;">17,756.63</div><div class="t" style="right:548.16px;font-size:5.0px;color:#2a2a2a;letter-spacing:-0.160px;">35,513.25</div><div class="t" style="left:257.2px;font-size:5.0px;color:#2a2a2a;letter-spacing:-0.140px;">30.04.2024</div><div class="t" style="right:465.96px;font-size:5.0px;color:#2a2a2a;letter-spacing:-0.160px;">17,564.75</div><div class="t" style="right:444.36px;font-size:5.0px;color:#b4324a;letter-spacing:-0.160px;">-1.08%</div><div class="t" style="right:417.96px;font-size:5.0px;color:#3a9040;letter-spacing:-0.160px;">765.52</div><div class="t" style="right:391.86px;font-size:5.0px;color:#3a9040;letter-spacing:-0.160px;">2.16%</div></div>
<div class="r" style="top:111px;height:8px;line-height:8px;transform:translate3d(0,0.75px,0) rotateX(0.01deg);"><div class="t" style="left:34px;font-size:5.0px;color:#2a2a2a;letter-spacing:-0.040px;">Long (17431)</div><div class="t" style="right:670.8px;font-size:5.0px;color:#2a2a2a;">2</div><div class="t" style="left:134.4px;font-size:5.0px;color:#2a2a2a;letter-spacing:-0.140px;">01.05.2024</div><div class="t" style="right:588.36px;font-size:5.0px;color:#2a2a2a;letter-spacing:-0.160px;">17,672.63</div><div class="t" style="right:548.16px;font-size:5.0px;color:#2a2a2a;letter-spacing:-0.160px;">35,345.25</div><div class="t" style="left:257.2px;font-size:5.0px;color:#2a2a2a;letter-spacing:-0.140px;">01.05.2024</div><div class="t" style="right:465.96px;font-size:5.0px;color:#2a2a2a;letter-spacing:-0.160px;">17,431.5</div><div class="t" style="right:444.36px;font-size:5.0px;color:#b4324a;letter-spacing:-0.160px;">-1.36%</div><div class="t" style="right:417.96px;font-size:5.0px;color:#b4324a;letter-spacing:-0.160px;">-966.52</div><div class="t" style="right:391.86px;font-size:5.0px;color:#b4324a;letter-spacing:-0.160px;">-2.73%</div></div>
<div class="r" style="top:120px;height:8px;line-height:8px;transform:translate3d(0,0.0px,0) rotateX(0.01deg);"><div class="t" style="left:34px;font-size:5.0px;color:#2a2a2a;letter-spacing:-0.040px;">Long (18184)</div><div class="t" style="right:670.8px;font-size:5.0px;color:#2a2a2a;">2</div><div class="t" style="left:134.4px;font-size:5.0px;color:#2a2a2a;letter-spacing:-0.140px;">08.05.2024</div><div class="t" style="right:588.36px;font-size:5.0px;color:#2a2a2a;letter-spacing:-0.160px;">18,134.25</div><div class="t" style="right:548.16px;font-size:5.0px;color:#2a2a2a;letter-spacing:-0.160px;">36,268.50</div><div class="t" style="left:257.2px;font-size:5.0px;color:#2a2a2a;letter-spacing:-0.140px;">08.05.2024</div><div class="t" style="right:465.96px;font-size:5.0px;color:#2a2a2a;letter-spacing:-0.160px;">18,184.25</div><div class="t" style="right:444.36px;font-size:5.0px;color:#3a9040;letter-spacing:-0.160px;">0.28%</div><div class="t" style="right:417.96px;font-size:5.0px;color:#3a9040;letter-spacing:-0.160px;">198.00</div><div class="t" style="right:391.86px;font-size:5.0px;color:#3a9040;letter-spacing:-0.160px;">0.55%</div></div>
<div class="r" style="top:128px;height:8px;line-height:8px;transform:translate3d(0,0.25px,0) rotateX(0.01deg);"><div class="t" style="left:34px;font-size:5.0px;color:#2a2a2a;letter-spacing:-0.040px;">Long (18248)</div><div class="t" style="right:670.8px;font-size:5.0px;color:#2a2a2a;">2</div><div class="t" style="left:134.4px;font-size:5.0px;color:#2a2a2a;letter-spacing:-0.140px;">10.05.2024</div><div class="t" style="right:588.36px;font-size:5.0px;color:#2a2a2a;letter-spacing:-0.160px;">18,339.63</div><div class="t" style="right:548.16px;font-size:5.0px;color:#2a2a2a;letter-spacing:-0.160px;">36,679.25</div><div class="t" style="left:257.2px;font-size:5.0px;color:#2a2a2a;letter-spacing:-0.140px;">10.05.2024</div><div class="t" style="right:465.96px;font-size:5.0px;color:#2a2a2a;letter-spacing:-0.160px;">18,248.5</div><div class="t" style="right:444.36px;font-size:5.0px;color:#b4324a;letter-spacing:-0.160px;">-0.50%</div><div class="t" style="right:417.96px;font-size:5.0px;color:#b4324a;letter-spacing:-0.160px;">-366.52</div><div class="t" style="right:391.86px;font-size:5.0px;color:#b4324a;letter-spacing:-0.160px;">-1.00%</div></div>
<div class="r" style="top:196px;height:8px;line-height:8px;transform:translate3d(0,0.7px,0) rotateX(0.01deg);"><div class="t" style="left:336.6px;width:200px;text-align:center;font-size:3px;color:#222;">▸</div></div>
<div class="r" style="top:228px;height:8px;line-height:8px;transform:translate3d(0,0.0px,0) rotateX(0.01deg);"><div class="t" style="left:333.3px;width:200px;text-align:center;font-size:4.6px;color:#566280;font-style:italic;font-weight:700;">i</div></div>
<div class="r" style="top:238px;height:8px;line-height:8px;transform:translate3d(0,0.0px,0) rotateX(0.01deg);"><div class="t" style="left:333.3px;width:200px;text-align:center;font-size:4.6px;color:#566280;font-style:italic;font-weight:700;">b</div></div>
<div class="r" style="top:247px;height:8px;line-height:8px;transform:translate3d(0,0.0px,0) rotateX(0.01deg);"><div class="t" style="left:333.3px;width:200px;text-align:center;font-size:4.6px;color:#566280;font-style:italic;font-weight:700;">d</div></div>
<div class="r" style="top:256px;height:8px;line-height:8px;transform:translate3d(0,0.0px,0) rotateX(0.01deg);"><div class="t" style="left:333.3px;width:200px;text-align:center;font-size:4.6px;color:#566280;font-style:italic;font-weight:700;">w</div></div>
<div class="r" style="top:265px;height:8px;line-height:8px;transform:translate3d(0,0.5px,0) rotateX(0.01deg);"><div class="t" style="left:333.3px;width:200px;text-align:center;font-size:4.6px;color:#566280;font-style:italic;font-weight:700;">m</div></div>
<div class="r" style="top:273px;height:8px;line-height:8px;transform:translate3d(0,0.9px,0) rotateX(0.01deg);"><div class="t" style="left:336.6px;width:200px;text-align:center;font-size:3px;color:#222;">▸</div></div>
<div class="r" style="top:280px;height:8px;line-height:8px;transform:translate3d(0,0.5px,0) rotateX(0.01deg);"><div class="t" style="left:421.3px;font-size:5px;color:#7f8cab;font-style:italic;">P</div></div>
<div style="left:-20px;top:178.2px;width:441px;height:310px;background:#fff;border:0.8px solid #9cc2ee;"></div>
<div style="left:367.3px;top:184.2px;width:4.6px;height:0.5px;background:#444;"></div>
<div style="left:387.4px;top:182px;width:4.5px;height:4.5px;background:transparent;border:0.5px solid #444;"></div>
<svg style="left:407px;top:181.8px" width="5" height="5" viewBox="0 0 5 5"><path d="M0.2 0.2 L4.8 4.8 M4.8 0.2 L0.2 4.8" stroke="#444" stroke-width="0.5"/></svg>
<div style="left:-20px;top:199.7px;width:440.2px;height:12.9px;background:#f0f0f0;border-top:0.6px solid #c0c0c0;border-bottom:1.3px solid #adadad;"></div>
<div style="left:3.3px;top:202.4px;width:0.5px;height:7.2px;background:#bdbdbd;"></div>
<div style="left:16.3px;top:202.4px;width:0.5px;height:7.2px;background:#bdbdbd;"></div>
<div style="left:-1px;top:203px;width:1.8px;height:5.6px;background:#5a5a5a;"></div>
<svg style="left:6px;top:202.3px" width="8" height="7" viewBox="0 0 8 7"><path d="M2.2 0.6 H6 L6.8 2.6 H1.4 Z" fill="#9a9a9a" stroke="#555" stroke-width="0.4"/><path d="M0.5 4.6 L1.4 2.6 H6.8 L7.7 4.6 L6.8 6.2 H1.4 Z" fill="#808080" stroke="#4a4a4a" stroke-width="0.4"/><rect x="3.2" y="4.2" width="1.8" height="0.8" fill="#d8c830"/></svg>
<div style="left:-20px;top:232px;width:427px;height:8px;background:#dcdcdc;"></div>
<div style="left:412px;top:213px;width:6.6px;height:270px;background:#f0f0f0;"></div>
<div style="left:412px;top:227.5px;width:6.6px;height:61.1px;background:#cbcbcb;"></div>
<svg style="left:413px;top:219.5px" width="5" height="4" viewBox="0 0 5 4"><path d="M0.4 3.2 L2.5 0.8 L4.6 3.2" fill="none" stroke="#444" stroke-width="0.8"/></svg>
<svg style="left:0;top:0" width="800" height="482" viewBox="0 0 800 482"><defs><linearGradient id="ag" gradientUnits="userSpaceOnUse" x1="0" y1="270" x2="0" y2="450"><stop offset="0" stop-color="#f6ae5c"/><stop offset="0.35" stop-color="#dcc96c"/><stop offset="0.7" stop-color="#b6e484"/><stop offset="1" stop-color="#96f796"/></linearGradient></defs><rect x="43.1" y="264.2" width="304.9" height="195.40000000000003" fill="#000"/><rect x="43.1" y="264.2" width="278.4" height="189.0" fill="#151515"/><rect x="57.60" y="264.2" width="63.00" height="189.0" fill="#1e1e1e"/><rect x="183.60" y="264.2" width="63.00" height="189.0" fill="#1e1e1e"/><rect x="309.60" y="264.2" width="11.90" height="189.0" fill="#1e1e1e"/><polygon points="70.20,449.60 82.80,391.68 95.40,391.68 108.00,334.93 120.60,334.93 133.20,326.60 145.80,348.86 158.40,320.55 171.00,329.87 183.60,329.87 196.20,275.63 208.80,344.11 221.40,344.11 234.00,344.11 246.60,344.11 259.20,344.11 271.80,330.08 284.40,330.08 297.00,356.05 309.60,356.05 309.60,449.60" fill="url(#ag)"/><line x1="43.1" y1="449.60" x2="70.20" y2="449.60" stroke="#2c4a2c" stroke-width="0.8"/><clipPath id="ac"><polygon points="70.20,449.60 82.80,391.68 95.40,391.68 108.00,334.93 120.60,334.93 133.20,326.60 145.80,348.86 158.40,320.55 171.00,329.87 183.60,329.87 196.20,275.63 208.80,344.11 221.40,344.11 234.00,344.11 246.60,344.11 259.20,344.11 271.80,330.08 284.40,330.08 297.00,356.05 309.60,356.05 309.60,449.60"/></clipPath><line x1="43.1" y1="449.60" x2="324.0" y2="449.60" stroke="#808080" stroke-opacity="0.24" stroke-width="0.55"/><line x1="43.1" y1="435.43" x2="324.0" y2="435.43" stroke="#808080" stroke-opacity="0.24" stroke-width="0.55"/><line x1="43.1" y1="421.26" x2="324.0" y2="421.26" stroke="#808080" stroke-opacity="0.24" stroke-width="0.55"/><line x1="43.1" y1="407.09" x2="324.0" y2="407.09" stroke="#808080" stroke-opacity="0.24" stroke-width="0.55"/><line x1="43.1" y1="392.92" x2="324.0" y2="392.92" stroke="#808080" stroke-opacity="0.24" stroke-width="0.55"/><line x1="43.1" y1="378.75" x2="324.0" y2="378.75" stroke="#808080" stroke-opacity="0.24" stroke-width="0.55"/><line x1="43.1" y1="364.58" x2="324.0" y2="364.58" stroke="#808080" stroke-opacity="0.24" stroke-width="0.55"/><line x1="43.1" y1="350.41" x2="324.0" y2="350.41" stroke="#808080" stroke-opacity="0.24" stroke-width="0.55"/><line x1="43.1" y1="336.24" x2="324.0" y2="336.24" stroke="#808080" stroke-opacity="0.24" stroke-width="0.55"/><line x1="43.1" y1="322.07" x2="324.0" y2="322.07" stroke="#808080" stroke-opacity="0.24" stroke-width="0.55"/><line x1="43.1" y1="307.90" x2="324.0" y2="307.90" stroke="#808080" stroke-opacity="0.24" stroke-width="0.55"/><line x1="43.1" y1="293.73" x2="324.0" y2="293.73" stroke="#808080" stroke-opacity="0.24" stroke-width="0.55"/><line x1="43.1" y1="279.56" x2="324.0" y2="279.56" stroke="#808080" stroke-opacity="0.24" stroke-width="0.55"/><line x1="120.60" y1="264.2" x2="120.60" y2="454.7" stroke="#808080" stroke-opacity="0.3" stroke-width="0.55"/><line x1="183.60" y1="264.2" x2="183.60" y2="454.7" stroke="#808080" stroke-opacity="0.3" stroke-width="0.55"/><line x1="208.80" y1="264.2" x2="208.80" y2="454.7" stroke="#808080" stroke-opacity="0.3" stroke-width="0.55"/><line x1="246.60" y1="264.2" x2="246.60" y2="454.7" stroke="#808080" stroke-opacity="0.3" stroke-width="0.55"/><line x1="309.60" y1="264.2" x2="309.60" y2="454.7" stroke="#808080" stroke-opacity="0.3" stroke-width="0.55"/><g clip-path="url(#ac)"><line x1="43.1" y1="449.60" x2="321.5" y2="449.60" stroke="#000" stroke-opacity="0.3" stroke-width="0.45"/><line x1="43.1" y1="435.43" x2="321.5" y2="435.43" stroke="#000" stroke-opacity="0.3" stroke-width="0.45"/><line x1="43.1" y1="421.26" x2="321.5" y2="421.26" stroke="#000" stroke-opacity="0.3" stroke-width="0.45"/><line x1="43.1" y1="407.09" x2="321.5" y2="407.09" stroke="#000" stroke-opacity="0.3" stroke-width="0.45"/><line x1="43.1" y1="392.92" x2="321.5" y2="392.92" stroke="#000" stroke-opacity="0.3" stroke-width="0.45"/><line x1="43.1" y1="378.75" x2="321.5" y2="378.75" stroke="#000" stroke-opacity="0.3" stroke-width="0.45"/><line x1="43.1" y1="364.58" x2="321.5" y2="364.58" stroke="#000" stroke-opacity="0.3" stroke-width="0.45"/><line x1="43.1" y1="350.41" x2="321.5" y2="350.41" stroke="#000" stroke-opacity="0.3" stroke-width="0.45"/><line x1="43.1" y1="336.24" x2="321.5" y2="336.24" stroke="#000" stroke-opacity="0.3" stroke-width="0.45"/><line x1="43.1" y1="322.07" x2="321.5" y2="322.07" stroke="#000" stroke-opacity="0.3" stroke-width="0.45"/><line x1="43.1" y1="307.90" x2="321.5" y2="307.90" stroke="#000" stroke-opacity="0.3" stroke-width="0.45"/><line x1="43.1" y1="293.73" x2="321.5" y2="293.73" stroke="#000" stroke-opacity="0.3" stroke-width="0.45"/><line x1="43.1" y1="279.56" x2="321.5" y2="279.56" stroke="#000" stroke-opacity="0.3" stroke-width="0.45"/><line x1="120.60" y1="264.2" x2="120.60" y2="453.2" stroke="#000" stroke-opacity="0.36" stroke-width="0.45"/><line x1="183.60" y1="264.2" x2="183.60" y2="453.2" stroke="#000" stroke-opacity="0.36" stroke-width="0.45"/><line x1="208.80" y1="264.2" x2="208.80" y2="453.2" stroke="#000" stroke-opacity="0.36" stroke-width="0.45"/><line x1="246.60" y1="264.2" x2="246.60" y2="453.2" stroke="#000" stroke-opacity="0.36" stroke-width="0.45"/><line x1="309.60" y1="264.2" x2="309.60" y2="453.2" stroke="#000" stroke-opacity="0.36" stroke-width="0.45"/></g><line x1="321.5" y1="264.2" x2="321.5" y2="459.6" stroke="#8a8a8a" stroke-width="0.6"/><line x1="43.1" y1="453.2" x2="321.5" y2="453.2" stroke="#8a8a8a" stroke-width="0.6"/><line x1="43.4" y1="264.2" x2="43.4" y2="459.6" stroke="#555" stroke-width="0.6"/><path d="M322 356.06 L324 353.36 H348 V358.76 H324 Z" fill="#3f7a3f"/></svg>
<div style="left:44px;top:264.8px;width:65px;height:5.6px;background:#000;"></div>
<div class="r" style="top:180px;height:8px;line-height:8px;transform:translate3d(0,0.9px,0) rotateX(0.01deg);"><div class="t" style="right:671.16px;font-size:5.0px;color:#1a1a1a;letter-spacing:0.040px;">Techlab_Minikurz_pyBT_lekce3 - Backtest Report - HtmlView</div></div>
<div class="r" style="top:191px;height:8px;line-height:8px;transform:translate3d(0,0.9px,0) rotateX(0.01deg);"><div class="t" style="right:796.1px;font-size:5.0px;color:#1a1a1a;">Edit</div><div class="t" style="left:9.9px;font-size:5.0px;color:#1a1a1a;letter-spacing:-0.016px;">View</div><div class="t" style="left:26.8px;font-size:5.0px;color:#1a1a1a;letter-spacing:0.239px;">Help</div></div>
<div class="r" style="top:202px;height:8px;line-height:8px;transform:translate3d(0,0.3px,0) rotateX(0.01deg);"><div class="t" style="left:-77.3px;width:200px;text-align:center;font-size:7px;color:#a89c0c;font-weight:700;text-shadow:0.3px 0.3px 0 #333;-webkit-text-stroke:0.3px #8a8008;">?</div></div>
<div class="r" style="top:218px;height:8px;line-height:8px;transform:translate3d(0,0.6px,0) rotateX(0.01deg);"><div class="t" style="left:102.3px;font-size:5.4px;color:#9a4aa8;text-decoration:underline;text-decoration-thickness:0.5px;text-underline-offset:0.6px;letter-spacing:0.077px;">Statistics</div><div class="t" style="left:130.5px;font-size:5.4px;color:#6a1080;font-weight:700;text-decoration:underline;text-decoration-thickness:0.5px;text-underline-offset:0.6px;letter-spacing:0.339px;">Charts</div><div class="t" style="left:155.5px;font-size:5.4px;color:#4c7ad2;text-decoration:underline;text-decoration-thickness:0.5px;text-underline-offset:0.6px;letter-spacing:0.159px;">Trades</div><div class="t" style="left:178.9px;font-size:5.4px;color:#4c7ad2;text-decoration:underline;text-decoration-thickness:0.5px;text-underline-offset:0.6px;letter-spacing:0.099px;">Formula</div><div class="t" style="left:205.7px;font-size:5.4px;color:#4c7ad2;text-decoration:underline;text-decoration-thickness:0.5px;text-underline-offset:0.6px;letter-spacing:0.041px;">Settings</div><div class="t" style="left:231.6px;font-size:5.4px;color:#4c7ad2;text-decoration:underline;text-decoration-thickness:0.5px;text-underline-offset:0.6px;letter-spacing:0.032px;">Symbols</div><div class="t" style="left:258.7px;font-size:5.4px;color:#4c7ad2;text-decoration:underline;text-decoration-thickness:0.5px;text-underline-offset:0.6px;letter-spacing:0.089px;">Monte Carlo</div><div class="t" style="left:27.5px;width:200px;text-align:center;font-size:5.2px;color:#333;">|</div><div class="t" style="left:52.4px;width:200px;text-align:center;font-size:5.2px;color:#333;">|</div><div class="t" style="left:75.9px;width:200px;text-align:center;font-size:5.2px;color:#333;">|</div><div class="t" style="left:102.3px;width:200px;text-align:center;font-size:5.2px;color:#333;">|</div><div class="t" style="left:128.4px;width:200px;text-align:center;font-size:5.2px;color:#333;">|</div><div class="t" style="left:155.5px;width:200px;text-align:center;font-size:5.2px;color:#333;">|</div></div>
<div class="r" style="top:232px;height:8px;line-height:8px;transform:translate3d(0,0.0px,0) rotateX(0.01deg);"><div class="t" style="left:185.8px;font-size:5.3px;color:#111;font-weight:700;letter-spacing:0.402px;">Charts</div></div>
<div class="r" style="top:248px;height:8px;line-height:8px;transform:translate3d(0,0.1px,0) rotateX(0.01deg);"><div class="t" style="right:766.4px;font-size:5.7px;color:#111;font-weight:700;">Portfolio Equity</div></div>
<div class="r" style="top:263px;height:8px;line-height:8px;transform:translate3d(0,0.6px,0) rotateX(0.01deg);"><div class="t" style="left:45px;font-size:5.0px;color:#f2f2f2;letter-spacing:0.116px;">Portfolio Equity = 51320.32</div></div>
<div class="r" style="top:275px;height:8px;line-height:8px;transform:translate3d(0,0.56px,0) rotateX(0.01deg);"><div class="t" style="right:453.96px;font-size:5.2px;color:#e6e6e6;letter-spacing:0.039px;">52,400</div></div>
<div class="r" style="top:289px;height:8px;line-height:8px;transform:translate3d(0,0.73px,0) rotateX(0.01deg);"><div class="t" style="right:453.96px;font-size:5.2px;color:#e6e6e6;letter-spacing:0.039px;">52,200</div></div>
<div class="r" style="top:303px;height:8px;line-height:8px;transform:translate3d(0,0.9px,0) rotateX(0.01deg);"><div class="t" style="right:453.96px;font-size:5.2px;color:#e6e6e6;letter-spacing:0.039px;">52,000</div></div>
<div class="r" style="top:318px;height:8px;line-height:8px;transform:translate3d(0,0.07px,0) rotateX(0.01deg);"><div class="t" style="right:453.96px;font-size:5.2px;color:#e6e6e6;letter-spacing:0.039px;">51,800</div></div>
<div class="r" style="top:332px;height:8px;line-height:8px;transform:translate3d(0,0.24px,0) rotateX(0.01deg);"><div class="t" style="right:453.96px;font-size:5.2px;color:#e6e6e6;letter-spacing:0.039px;">51,600</div></div>
<div class="r" style="top:346px;height:8px;line-height:8px;transform:translate3d(0,0.41px,0) rotateX(0.01deg);"><div class="t" style="right:453.96px;font-size:5.2px;color:#e6e6e6;letter-spacing:0.039px;">51,400</div></div>
<div class="r" style="top:352px;height:8px;line-height:8px;transform:translate3d(0,0.16px,0) rotateX(0.01deg);"><div class="t" style="right:452.5px;font-size:4.6px;color:#9fd89f;">51,320.3</div></div>
<div class="r" style="top:360px;height:8px;line-height:8px;transform:translate3d(0,0.58px,0) rotateX(0.01deg);"><div class="t" style="right:453.96px;font-size:5.2px;color:#e6e6e6;letter-spacing:0.039px;">51,200</div></div>
<div class="r" style="top:374px;height:8px;line-height:8px;transform:translate3d(0,0.75px,0) rotateX(0.01deg);"><div class="t" style="right:453.96px;font-size:5.2px;color:#e6e6e6;letter-spacing:0.039px;">51,000</div></div>
<div class="r" style="top:388px;height:8px;line-height:8px;transform:translate3d(0,0.92px,0) rotateX(0.01deg);"><div class="t" style="right:453.96px;font-size:5.2px;color:#e6e6e6;letter-spacing:0.039px;">50,800</div></div>
<div class="r" style="top:403px;height:8px;line-height:8px;transform:translate3d(0,0.09px,0) rotateX(0.01deg);"><div class="t" style="right:453.96px;font-size:5.2px;color:#e6e6e6;letter-spacing:0.039px;">50,600</div></div>
<div class="r" style="top:417px;height:8px;line-height:8px;transform:translate3d(0,0.26px,0) rotateX(0.01deg);"><div class="t" style="right:453.96px;font-size:5.2px;color:#e6e6e6;letter-spacing:0.039px;">50,400</div></div>
<div class="r" style="top:431px;height:8px;line-height:8px;transform:translate3d(0,0.43px,0) rotateX(0.01deg);"><div class="t" style="right:453.96px;font-size:5.2px;color:#e6e6e6;letter-spacing:0.039px;">50,200</div></div>
<div class="r" style="top:445px;height:8px;line-height:8px;transform:translate3d(0,0.6px,0) rotateX(0.01deg);"><div class="t" style="right:453.96px;font-size:5.2px;color:#e6e6e6;letter-spacing:0.039px;">50,000</div></div>
<div class="r" style="top:452px;height:8px;line-height:8px;transform:translate3d(0,0.5px,0) rotateX(0.01deg);"><div class="t" style="left:59.2px;font-size:4.6px;color:#e6e6e6;">15</div><div class="t" style="left:122.2px;font-size:4.6px;color:#e6e6e6;">22</div><div class="t" style="left:185.2px;font-size:4.6px;color:#e6e6e6;">29</div><div class="t" style="left:210.4px;font-size:4.6px;color:#e6e6e6;font-weight:700;">May</div><div class="t" style="left:248.2px;font-size:4.6px;color:#e6e6e6;">6</div><div class="t" style="left:311.2px;font-size:4.6px;color:#e6e6e6;">13</div></div>
<div class="r" style="top:468px;height:8px;line-height:8px;transform:translate3d(0,0.0px,0) rotateX(0.01deg);"><div class="t" style="right:756.7px;font-size:5.7px;color:#111;font-weight:700;">Underwater Equity</div></div>
</body></html>
